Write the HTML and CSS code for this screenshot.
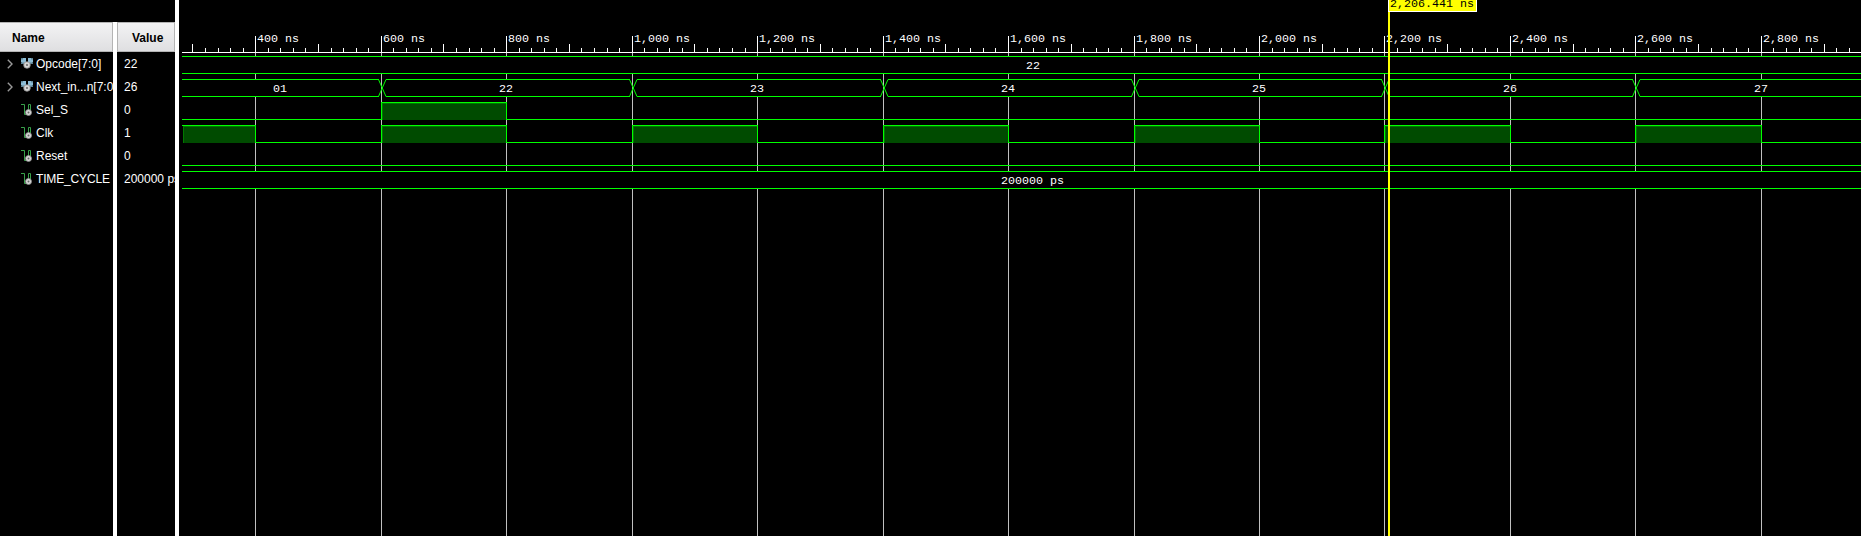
FILE: index.html
```html
<!DOCTYPE html>
<html lang="en">
<head>
<meta charset="utf-8">
<title>Waveform</title>
<link rel="stylesheet" href="styles.css">
</head>
<body>
<svg class="defs" aria-hidden="true">
  <symbol id="bus" viewBox="0 0 12 12">
    <path d="M0 0h5v5.500H1.500L0 4zM7 0h5v4l-1.500 1.500H7z" fill="#8dbdd6"/>
    <path d="M0 0h2v1.500H0zM10 0h2v1.500h-2zM0 4.500h3V6H0zM9 4.500h3V6H9z" fill="#5f8597"/>
    <circle cx="6" cy="7" r="3.300" fill="#d6d6d6" stroke="#8b8b8b" stroke-width=".8"/>
    <circle cx="6" cy="7" r="1" fill="#666"/>
  </symbol>
  <symbol id="signal" viewBox="0 0 12 12">
    <path d="M0 .5h3.500v10H6M7.500 6V.5h2V6" fill="none" stroke="#38a04a"/>
    <circle cx="7.500" cy="8.500" r="3" fill="#d6d6d6" stroke="#8b8b8b" stroke-width=".8"/>
    <circle cx="7.500" cy="8.500" r="1" fill="#666"/>
  </symbol>
  <symbol id="chevron" viewBox="0 0 6 10">
    <path d="M.8.800 5 5 .8 9.200" fill="none" stroke="#999" stroke-width="1.400"/>
  </symbol>
</svg>
<main class="viewer">
  <section class="column names">
    <h2 class="heading">Name</h2>
    <div class="row"><svg class="chevron"><use href="#chevron"/></svg><svg class="icon"><use href="#bus"/></svg><span>Opcode[7:0]</span></div>
    <div class="row"><svg class="chevron"><use href="#chevron"/></svg><svg class="icon"><use href="#bus"/></svg><span>Next_in...n[7:0]</span></div>
    <div class="row"><i class="chevron"></i><svg class="icon"><use href="#signal"/></svg><span>Sel_S</span></div>
    <div class="row"><i class="chevron"></i><svg class="icon"><use href="#signal"/></svg><span>Clk</span></div>
    <div class="row"><i class="chevron"></i><svg class="icon"><use href="#signal"/></svg><span>Reset</span></div>
    <div class="row"><i class="chevron"></i><svg class="icon"><use href="#signal"/></svg><span class="caps">TIME_CYCLE</span></div>
  </section>
  <div class="divider short"></div>
  <section class="column values">
    <h2 class="heading">Value</h2>
    <div class="row">22</div>
    <div class="row">26</div>
    <div class="row">0</div>
    <div class="row">1</div>
    <div class="row">0</div>
    <div class="row">200000 ps</div>
  </section>
  <div class="divider"></div>
  <section class="waves"><svg id="plot" class="plot" viewBox="179 0 1682 536"></svg></section>
</main>
<script src="wave.js"></script>
</body>
</html>
```
FILE: styles.css
```css
* { box-sizing: border-box; }
body { margin: 0; background: #000; overflow: hidden; }
.defs { position: absolute; width: 0; height: 0; }
.viewer {
  display: flex;
  width: 1861px;
  height: 536px;
  background: #000;
  color: #fff;
  font: 12px "Liberation Sans", Arial, sans-serif;
}
.column { padding-top: 22px; overflow: hidden; white-space: nowrap; flex: none; }
.names { width: 113px; }
.values { width: 58px; }
.heading {
  height: 30px;
  margin: 0 0 1px;
  padding-left: 12px;
  font-size: 12px;
  line-height: 30px;
  color: #000;
  background: linear-gradient(#f3f3f4, #dfdfe1);
  border: 1px solid #b4b4b4;
  border-left: 0;
}
.values .heading { padding-left: 14px; border-left: 1px solid #b4b4b4; }
.row { height: 23px; display: flex; align-items: center; line-height: 23px; }
.names .row { padding-left: 7px; }
.values .row { padding-left: 7px; }
.caps { letter-spacing: -.15px; }
.chevron { width: 6px; height: 10px; margin: 0 8px 1px 0; flex: none; }
.icon { width: 12px; height: 12px; margin: 0 3px 1px 0; flex: none; }
.divider { width: 4px; background: #fff; flex: none; }
.short { margin-top: 22px; }
.waves { width: 1682px; flex: none; }
.plot { display: block; width: 1682px; height: 536px; }
.plot text {
  font: 11.670px "Liberation Mono", "Courier New", monospace;
  fill: #fff;
  white-space: pre;
}
.plot .cursor-time { fill: #000; }
.trace { fill: none; stroke: #0f0; stroke-width: 1; }
```
FILE: wave.js
```js
const plot = document.getElementById("plot");
const NS = "http://www.w3.org/2000/svg";
const LEFT = 182, RIGHT = 1861;

function add(tag, attrs, text) {
  const el = document.createElementNS(NS, tag);
  for (const k in attrs) el.setAttribute(k, attrs[k]);
  if (text) el.textContent = text;
  plot.appendChild(el);
}
const rect = (x, y, width, height, fill) => add("rect", { x, y, width, height, fill });
const label = (x, y, t, cls) => add("text", { x, y, class: cls || "" }, t);
const hline = (x1, x2, y) => rect(x1, y, x2 - x1, 1, "#0f0");
const timeX = ns => Math.round(255.22 + (ns - 400) * 0.62735);

// Grid and ruler
for (let t = 400; t <= 2800; t += 200) {
  const x = timeX(t);
  rect(x, 53, 1, 3, "#c0c0c0");
  rect(x, 74, 1, 5, "#c0c0c0");
  rect(x, 97, 1, 74, "#c0c0c0");
  rect(x, 189, 1, 347, "#c0c0c0");
  label(x + 2, 42, t.toLocaleString("en-US") + " ns");
}
for (let t = 300; t <= 2940; t += 20) {
  const top = t % 200 === 0 ? 36 : t % 100 === 0 ? 44 : 48;
  rect(timeX(t), top, 1, 52 - top, "#fff");
}
rect(LEFT, 52, RIGHT - LEFT, 1, "#fff");

// Constant buses
for (const y of [56, 73, 171, 188, 165]) hline(LEFT, RIGHT, y);
label(1026, 69, "22");
label(1001, 184, "200000 ps");

// Next instruction bus
let start = LEFT;
for (let t = 600; t <= 2600; t += 400) {
  const a = timeX(t) - 3;
  hline(start, a + 1, 79);
  hline(start, a + 1, 96);
  // The grid shows through the gap at each transition
  rect(a + 3, 79, 1, 18, "#c0c0c0");
  add("path", { class: "trace", d: `M${a + .5} 79.500L${a + 8} 96.500M${a + .5} 96.500L${a + 8} 79.500` });
  start = a + 8;
}
hline(start, RIGHT, 79);
hline(start, RIGHT, 96);
[[273, "01"], [499, "22"], [750, "23"], [1001, "24"], [1252, "25"], [1503, "26"], [1754, "27"]]
  .forEach(([x, t]) => label(x, 92, t));

// Single-bit signals
function pulse(x1, x2, y, edge) {
  rect(x1, y, x2 - x1, 18, "#004b00");
  rect(x1, y + 1, x2 - x1, 1, "#007800");
  rect(x1 + (edge ? 1 : 0), y + 1, 1, 17, "#007800");
  hline(edge ? x1 : LEFT, x2 + 1, y);
  if (edge) rect(x1, y, 1, 18, "#0f0");
  rect(x2, y, 1, 18, "#0f0");
}
hline(LEFT, timeX(600), 119);
hline(timeX(800), RIGHT, 119);
pulse(timeX(600), timeX(800), 102, true);
pulse(183, timeX(400), 125, false);
for (let t = 400; t <= 2800; t += 400) {
  hline(timeX(t), t === 2800 ? RIGHT : timeX(t + 200), 142);
  if (t < 2800) pulse(timeX(t + 200), timeX(t + 400), 125, true);
}

// Time cursor
rect(1388, 0, 89, 12, "#fff");
rect(1389, 0, 87, 11, "#ff0");
rect(1388, 12, 2, 524, "#ff0");
label(1390, 7, "2,206.441 ns", "cursor-time");
```
